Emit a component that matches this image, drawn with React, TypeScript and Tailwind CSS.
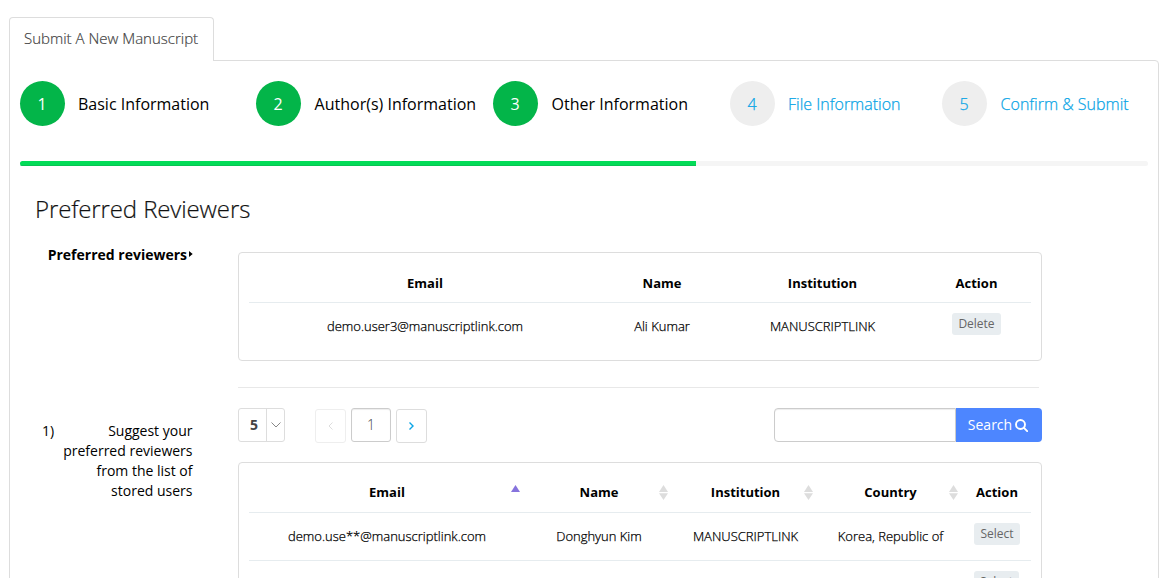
import React from "react";

const steps = [
  { label: "Basic Information", done: true, width: "w-[236px]", gap: "gap-[13px]" },
  { label: "Author(s) Information", done: true, width: "w-[237px]", gap: "gap-[13.6px]" },
  { label: "Other Information", done: true, width: "w-[237px]", gap: "gap-[13.6px]" },
  { label: "File Information", done: false, width: "w-[212px]", gap: "gap-[13px]" },
  { label: "Confirm & Submit", done: false, width: "w-[206px]", gap: "gap-[13.6px]" },
];

function Steps() {
  return (
    <ol className="flex h-[45px]">
      {steps.map((s, i) => (
        <li key={s.label} className={`flex shrink-0 items-center ${s.gap} ${s.width}`}>
          <span
            className={`flex size-[45px] shrink-0 items-center justify-center rounded-full pr-px text-[16px] ${
              s.done
                ? "bg-[#03b549] text-white"
                : "bg-[#eeeeee] font-light text-[#0aa5e6] [-webkit-text-stroke:0.25px_currentColor]"
            }`}
          >
            {i + 1}
          </span>
          <span
            className={`whitespace-nowrap text-[16px] ${
              s.done
                ? "text-black"
                : "font-light text-[#0aa5e6] [-webkit-text-stroke:0.25px_currentColor]"
            }`}
          >
            {s.label}
          </span>
        </li>
      ))}
    </ol>
  );
}

function SmallButton({ children }: { children: React.ReactNode }) {
  return (
    <button className="h-[22px] rounded-[3px] bg-[#e8edf0] px-[6px] text-[12px] font-normal leading-[22px] text-[#666666] [-webkit-text-stroke:0]">
      {children}
    </button>
  );
}

function SortIcon({ active }: { active?: boolean }) {
  return (
    <svg className="absolute right-[5px] top-[22px]" width="9" height="15" viewBox="0 0 9 15">
      <path d="M4.5 0 9 7H0z" fill={active ? "#8673dd" : "#dddddd"} />
      {!active && <path d="M0 8.2h9L4.5 15z" fill="#dddddd" />}
    </svg>
  );
}

function SortHeader({ label, active }: { label: string; active?: boolean }) {
  return (
    <div className="relative flex h-full items-center justify-center pt-[10px]">
      {label}
      <SortIcon active={active} />
    </div>
  );
}

function UserRow({ email, name }: { email: string; name: string }) {
  return (
    <div className="grid h-[48px] grid-cols-[276px_148px_145px_145px_68px] items-center border-b border-[#e6ecef] text-center text-[13px] font-light text-black [-webkit-text-stroke:0.25px_currentColor]">
      <span>{email}</span>
      <span>{name}</span>
      <span>MANUSCRIPTLINK</span>
      <span>Korea, Republic of</span>
      <span className="flex justify-center pb-[5px]">
        <SmallButton>Select</SmallButton>
      </span>
    </div>
  );
}

export default function App() {
  return (
    <div className="h-[578px] w-[1166px] overflow-hidden bg-white pl-[9px] pt-[17px] font-['Open_Sans',sans-serif] text-black">
      <div className="relative z-10 flex h-[44px] w-[205px] items-center rounded-t-[4px] border border-b-0 border-[#dddddd] bg-white pb-[2px] pl-[14px] text-[15px] font-light text-[#444444] [-webkit-text-stroke:0.2px_currentColor]">
        <span className="whitespace-nowrap">Submit A New Manuscript</span>
      </div>
      <div className="-mt-px h-[640px] w-[1150px] rounded-tr-[4px] border border-[#dddddd] px-[10px] pt-[20px]">
        <Steps />
        <div className="mt-[35px] h-[5px] w-[1128px] overflow-hidden rounded-[3px] bg-[#f5f5f5]">
          <div className="h-full w-[676px] border-b border-[#0ac254] bg-[#02dc57]" />
        </div>

        <h1 className="ml-[15px] mt-[26px] h-[34px] text-[24px] font-light leading-[34px] tracking-[-0.12px] text-[#111111] [-webkit-text-stroke:0.2px_currentColor]">
          Preferred Reviewers
        </h1>

        <div className="mt-[26px] flex">
          <div className="-mt-[8px] flex h-[20px] w-[173px] items-center justify-end gap-[2px] text-[14px] font-bold">
            Preferred reviewers
            <svg width="4" height="6" viewBox="0 0 4 6">
              <path d="M0 0 3.7 3 0 6z" />
            </svg>
          </div>
          <div className="ml-[45px] h-[109px] w-[804px] rounded-[4px] border border-[#dddddd] px-[10px]">
            <div className="grid h-[50px] grid-cols-[352px_122px_199px_109px] items-center border-b border-[#e6ecef] pt-[13px] text-center text-[13px] font-bold">
              <span>Email</span>
              <span>Name</span>
              <span>Institution</span>
              <span>Action</span>
            </div>
            <div className="grid h-[47px] grid-cols-[352px_122px_199px_109px] items-center text-center text-[13px] font-light [-webkit-text-stroke:0.25px_currentColor]">
              <span>demo.user3@manuscriptlink.com</span>
              <span>Ali Kumar</span>
              <span>MANUSCRIPTLINK</span>
              <span className="flex justify-center pb-[5px]">
                <SmallButton>Delete</SmallButton>
              </span>
            </div>
          </div>
        </div>

        <div className="ml-[218px] mt-[26px] h-px w-[801px] bg-[#e8e8e8]" />

        <div className="mt-[20px] flex">
          <div className="mt-[13px] flex w-[172.5px] justify-between pl-[22px] text-[14px] leading-[20px]">
            <span>1)</span>
            <p className="w-[134px] text-right">
              Suggest your preferred reviewers from the list of stored users
            </p>
          </div>
          <div className="ml-[45.5px] w-[804px]">
            <div className="flex">
              <div className="flex h-[34px] w-[47px] rounded-[3px] border border-[#dddddd]">
                <span className="flex w-[28px] items-center justify-center border-r border-[#dddddd] pb-[2px] pl-[3px] text-[14px] font-bold text-[#444444]">
                  5
                </span>
                <span className="flex flex-1 items-center justify-center pb-px">
                  <svg width="10" height="6" viewBox="0 0 10 6" fill="none" stroke="#888888">
                    <path d="M.5.5 5 5 9.500.5" />
                  </svg>
                </span>
              </div>
              <div className="ml-[30px] mt-px flex h-[34px] w-[31px] items-center justify-center rounded-[3px] border border-[#eeeeee]">
                <svg width="5" height="8" viewBox="0 0 5 8" fill="none" stroke="#dddddd">
                  <path d="M4.500.5 1 4l3.500 3.500" />
                </svg>
              </div>
              <div className="ml-[5px] flex h-[34px] w-[40px] items-center justify-center rounded-[3px] border border-[#cccccc] pb-[2px] text-[14px] font-light text-[#444444] shadow-[inset_0_1px_1px_rgba(0,0,0,0.075)]">
                1
              </div>
              <div className="ml-[5px] mt-px flex h-[34px] w-[31px] items-center justify-center rounded-[3px] border border-[#dddddd]">
                <svg width="5" height="8" viewBox="0 0 5 8" fill="none" stroke="#0aa5e6" strokeWidth="1.4">
                  <path d="M.5.5 4 4 .5 7.500" />
                </svg>
              </div>
              <div className="ml-auto flex h-[34px]">
                <input
                  aria-label="Search"
                  className="h-full w-[182px] rounded-l-[4px] border border-[#cccccc] shadow-[inset_0_1px_1px_rgba(0,0,0,0.075)] outline-none"
                />
                <button className="flex h-full w-[86px] items-center justify-center gap-[3px] rounded-r-[4px] bg-[#4d86ff] pr-[2px] text-[14px] text-white">
                  <span className="pb-[2px]">Search</span>
                  <svg width="13" height="13" viewBox="0 0 13 13" fill="none" stroke="white" strokeWidth="1.9">
                    <circle cx="5.500" cy="5.500" r="4.500" />
                    <path d="m8.700 8.700 3.500 3.500" strokeLinecap="round" />
                  </svg>
                </button>
              </div>
            </div>

            <div className="mt-[19px] h-[200px] rounded-[4px] border border-[#dddddd] px-[10px]">
              <div className="grid h-[50px] grid-cols-[276px_148px_145px_145px_68px] items-center border-b border-[#e6ecef] text-center text-[13px] font-bold">
                <SortHeader label="Email" active />
                <SortHeader label="Name" />
                <SortHeader label="Institution" />
                <SortHeader label="Country" />
                <span className="pt-[10px]">Action</span>
              </div>
              <UserRow email="demo.use**@manuscriptlink.com" name="Donghyun Kim" />
              <div className="flex h-[48px] items-center justify-end pb-[6px] pr-[12px]">
                <SmallButton>Select</SmallButton>
              </div>
            </div>
          </div>
        </div>
      </div>
    </div>
  );
}
